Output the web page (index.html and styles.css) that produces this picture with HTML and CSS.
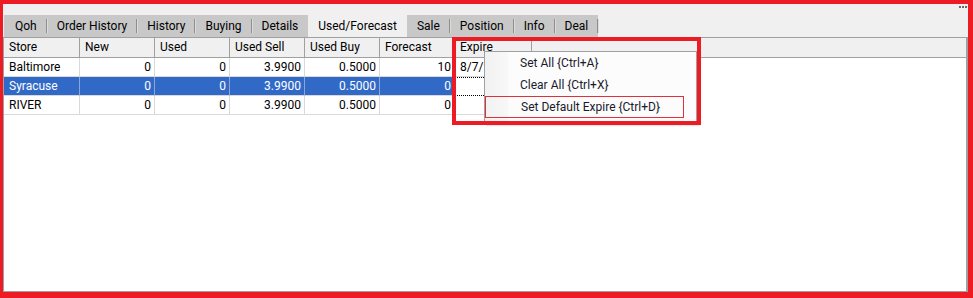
FILE: index.html
```html
<!DOCTYPE html>
<html lang="en">
<head>
    <meta charset="UTF-8">
    <title>Used/Forecast</title>
    <link rel="stylesheet" href="styles.css">
</head>
<body>
    <div class="window">
        <div class="dots"><i></i><i></i><i></i></div>

        <div class="tabs">
            <div class="tab">Qoh</div>
            <div class="tab">Order History</div>
            <div class="tab">History</div>
            <div class="tab">Buying</div>
            <div class="tab">Details</div>
            <div class="tab active">Used/Forecast</div>
            <div class="tab">Sale</div>
            <div class="tab">Position</div>
            <div class="tab">Info</div>
            <div class="tab">Deal</div>
        </div>

        <div class="grid">
            <div class="row head">
                <div class="cell">Store</div>
                <div class="cell">New</div>
                <div class="cell">Used</div>
                <div class="cell">Used Sell</div>
                <div class="cell">Used Buy</div>
                <div class="cell">Forecast</div>
                <div class="cell">Expire</div>
                <div class="cell filler"></div>
            </div>
            <div class="row">
                <div class="cell">Baltimore</div>
                <div class="cell num">0</div>
                <div class="cell num">0</div>
                <div class="cell num">3.9900</div>
                <div class="cell num">0.5000</div>
                <div class="cell num">10</div>
                <div class="cell">8/7/2024</div>
            </div>
            <div class="row selected">
                <div class="cell">Syracuse</div>
                <div class="cell num">0</div>
                <div class="cell num">0</div>
                <div class="cell num">3.9900</div>
                <div class="cell num">0.5000</div>
                <div class="cell num">0</div>
                <div class="cell focus"></div>
            </div>
            <div class="row">
                <div class="cell">RIVER</div>
                <div class="cell num">0</div>
                <div class="cell num">0</div>
                <div class="cell num">3.9900</div>
                <div class="cell num">0.5000</div>
                <div class="cell num">0</div>
                <div class="cell"></div>
            </div>
        </div>

        <div class="menu">
            <div class="menu-item">Set All {Ctrl+A}</div>
            <div class="menu-item">Clear All {Ctrl+X}</div>
            <div class="menu-item marked">Set Default Expire {Ctrl+D}</div>
        </div>

        <div class="callout"></div>
    </div>
</body>
</html>
```

FILE: styles.css
```css
body {
    margin: 0;
    font-family: Roboto, 'Noto Sans', sans-serif;
    font-size: 12px;
    color: #000;
}
.window {
    position: relative;
    box-sizing: border-box;
    width: 973px;
    height: 298px;
    border-style: solid;
    border-color: #ed1c24;
    border-width: 4px 5px 6px 3px;
    background: #f0f0f0;
    padding-top: 11px;
    display: flex;
    flex-direction: column;
}
/* little grip in the corner */
.dots {
    position: absolute;
    top: 2px;
    right: 1px;
    display: flex;
    gap: 1px;
}
.dots i {
    width: 2px;
    height: 2px;
    background: #6a6a6a;
}
.tabs {
    display: flex;
    align-self: flex-start;
    height: 22px;
    background: #c8c8c8;
    margin-left: 1px;
}
.tab {
    display: flex;
    align-items: center;
    padding: 0 10px;
    position: relative;
    white-space: nowrap;
}
.tab:first-child {
    padding-left: 11px;
}
.tab::after {
    content: "";
    position: absolute;
    right: 0;
    top: 4px;
    bottom: 4px;
    width: 1px;
    background: #8e8e8e;
    box-shadow: 1px 0 0 #dcdcdc;
}
.tab.active {
    background: #f0f0f0;
}
.tab.active::after,
.tab:has(+ .active)::after {
    display: none;
}
.grid {
    flex: 1;
    background: #fff;
    border: 1px solid #a0a0a0;
    border-right-width: 2px;
}
.row {
    display: grid;
    grid-template-columns: 76px 75px 75px 75px 75px 75px 77px 1fr;
    height: 19px;
}
.cell {
    box-sizing: border-box;
    border-right: 1px solid #d9d9d9;
    border-bottom: 1px solid #d9d9d9;
    padding: 0 4px 0 5px;
    line-height: 18px;
    white-space: nowrap;
    overflow: hidden;
}
.num {
    text-align: right;
    padding-right: 3px;
}
.head {
    height: 20px;
    background: #f0f0f0;
}
.head .cell {
    border-color: #a0a0a0;
    line-height: 19px;
    padding-left: 5px;
}
.head .filler {
    border-right: none;
}
.selected .cell {
    background: #3169c6;
    color: #fff;
    border-right-color: #8aa6d8;
    border-bottom-color: #d9d9d9;
}
.selected .focus {
    background: #fff;
    border: 1px dotted #000;
}
.menu {
    position: absolute;
    left: 481px;
    top: 47px;
    width: 213px;
    box-sizing: border-box;
    padding-bottom: 4px;
    border: 1px solid #a0a0a0;
    background: linear-gradient(to right, #f1f1f1, #f8f8f8 23px, #fcfcfc 24px);
    box-shadow: 2px 2px 2px rgba(0, 0, 0, 0.3);
}
.menu-item {
    height: 22px;
    line-height: 22px;
    padding-left: 35px;
    color: #1a1a2e;
}
.menu-item.marked {
    box-sizing: border-box;
    width: 199px;
    border: 1px solid #e0303a;
    line-height: 20px;
}
.callout {
    position: absolute;
    left: 449px;
    top: 33px;
    width: 249px;
    height: 88px;
    box-sizing: border-box;
    border: 4px solid #ed1c24;
}
```
